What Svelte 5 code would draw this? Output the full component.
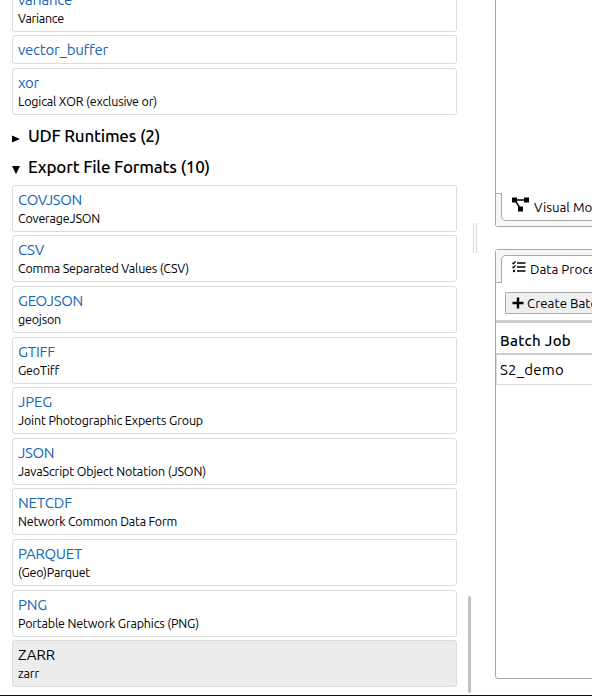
<script>
  const processes = [
    { name: 'variance', w: 54, text: 'Variance', tw: 46 },
    { name: 'vector_buffer', w: 90 },
    { name: 'xor', w: 21, text: 'Logical XOR (exclusive or)', tw: 139 }
  ];
  const formats = [
    { name: 'COVJSON', w: 64, text: 'CoverageJSON', tw: 82 },
    { name: 'CSV', w: 26, text: 'Comma Separated Values (CSV)', tw: 171 },
    { name: 'GEOJSON', w: 65, text: 'geojson', tw: 43 },
    { name: 'GTIFF', w: 37, text: 'GeoTiff', tw: 41 },
    { name: 'JPEG', w: 34, text: 'Joint Photographic Experts Group', tw: 185 },
    { name: 'JSON', w: 36, text: 'JavaScript Object Notation (JSON)', tw: 188 },
    { name: 'NETCDF', w: 54, text: 'Network Common Data Form', tw: 159 },
    { name: 'PARQUET', w: 64, text: '(Geo)Parquet', tw: 72 },
    { name: 'PNG', w: 29, text: 'Portable Network Graphics (PNG)', tw: 181 },
    { name: 'ZARR', w: 37, text: 'zarr', tw: 21, active: true }
  ];

  // Tracks a label so that it fills the given width
  function fit(node, width) {
    const natural = node.getBoundingClientRect().width;
    node.style.letterSpacing = `${(width - natural) / node.textContent.length}px`;
  }
</script>

{#snippet card(item)}
  <li class="card" class:active={item.active} class:single={!item.text}>
    <div class="name"><span use:fit={item.w}>{item.name}</span></div>
    {#if item.text}<div class="summary"><span use:fit={item.tw}>{item.text}</span></div>{/if}
  </li>
{/snippet}

<div class="app">
  <aside>
    <ul class="processes">
      {#each processes as item}{@render card(item)}{/each}
    </ul>
    <h3>
      <svg width="8" height="8" viewBox="0 0 8 8"><path d="M0 0.5 8 4 0 7.5Z" /></svg>
      <span use:fit={132}>UDF Runtimes (2)</span>
    </h3>
    <h3>
      <svg width="8" height="8" viewBox="0 0 8 8"><path d="M0 0H8L4 8Z" /></svg>
      <span use:fit={182}>Export File Formats (10)</span>
    </h3>
    <ul class="formats">
      {#each formats as item}{@render card(item)}{/each}
    </ul>
  </aside>
  <div class="gutter">
    <div class="thumb"></div>
    <div class="grip"></div>
  </div>
  <main>
    <section class="editor">
      <div class="tabs bottom">
        <div class="edge"></div>
        <div class="tab">
          <svg class="diagram" width="17" height="15" viewBox="0 0 17 15">
            <path d="M0 .5h5v5H0zM12 .5h5v5h-5zM6 9.5h5v5H6z" />
            <path d="M4 3H13M3.5 4 8 11" fill="none" stroke="#000" stroke-width="1.4" />
          </svg>
          <span>Visual Model</span>
        </div>
      </div>
    </section>
    <section class="jobs">
      <div class="tabs top">
        <div class="edge"></div>
        <div class="tab">
          <svg class="tasks" width="14" height="12" viewBox="0 0 14 12">
            <path d="M5 2H13.5M5 6H13.5M5 10H13.5" fill="none" stroke="#000" stroke-width="1.6" />
            <path d="M.4 1.8 1.4 2.8 3.6.4M.4 5.8 1.4 6.8 3.6 4.4" fill="none" stroke="#000" stroke-width="1.3" />
            <circle cx="2" cy="10" r="1.2" />
          </svg>
          <span>Data Processing</span>
        </div>
      </div>
      <div class="toolbar">
        <button>
          <svg width="12" height="12" viewBox="0 0 12 12"><path d="M4.8.5h2.4v4.3h4.3v2.4H7.2v4.3H4.8V7.2H.5V4.8h4.3z" /></svg>
          <span>Create Batch Job</span>
        </button>
      </div>
      <div class="head"><span use:fit={71}>Batch Job</span></div>
      <div class="row"><span use:fit={64}>S2_demo</span></div>
    </section>
  </main>
</div>

<style>
  :global(body) { overflow: hidden; background: #fff; }
  .app {
    box-sizing: border-box;
    display: flex;
    width: 592px;
    height: 696px;
    overflow: hidden;
    border-bottom: 1px solid #111;
    font-family: Ubuntu, "Noto Sans", sans-serif;
    color: #000;
  }
  span { white-space: nowrap; }
  svg { flex: none; }
  aside { width: 445px; padding-left: 12px; flex: none; }
  ul { list-style: none; margin: 0; padding: 0; display: flex; flex-direction: column; gap: 3.6px; }
  .processes { margin-top: -15.4px; margin-bottom: 5.7px; }
  .formats { margin-top: 2.3px; }
  .card {
    box-sizing: border-box;
    height: 47px;
    flex: none;
    border: 1px solid #ddd;
    border-radius: 3px;
    padding: 4px 5px;
  }
  .card.single { height: 29px; }
  .card.active { background: #ededed; }
  .name { height: 20px; line-height: 20px; font-size: 15px; color: #1665b6; }
  .active .name { color: #000; }
  .summary { height: 17px; line-height: 16px; font-size: 12.5px; }
  h3 {
    display: flex;
    align-items: center;
    gap: 8px;
    height: 31px;
    margin: 0;
    font-size: 17px;
    font-weight: 500;
  }
  h3 svg { margin-top: 6px; }

  .gutter { width: 38px; flex: none; display: flex; align-items: flex-start; }
  .thumb { width: 3px; height: 97px; margin: 596px 0 0 11px; border-radius: 2px; background: #c1c1c1; }
  .grip {
    box-sizing: border-box;
    width: 4px;
    height: 30px;
    margin: 223px 0 0 2px;
    border: solid #d8d8d8;
    border-width: 0 1px;
  }

  main { width: 160px; flex: none; display: flex; flex-direction: column; gap: 22px; }
  section { box-sizing: border-box; border: 1px solid #a6a6a6; }
  .editor { height: 227px; border-top: 0; border-radius: 0 0 0 3px; padding-top: 193px; }
  .jobs { height: 430px; border-radius: 3px 0 0 3px; }
  .tabs { box-sizing: border-box; height: 33px; display: flex; background: #f7f7f7; }
  .edge { box-sizing: border-box; width: 5px; flex: none; }
  .bottom .edge { border-top: 1px solid #aaa; }
  .top .edge { border-bottom: 1px solid #aaa; }
  .tab {
    box-sizing: border-box;
    width: 155px;
    flex: none;
    display: flex;
    align-items: center;
    background: #fff;
    border: 1px solid #aaa;
    font-size: 13.33px;
  }
  .bottom .tab { height: 28px; border-top: 0; border-radius: 0 0 0 5px; padding-left: 10px; gap: 5px; }
  .top .tab { height: 28px; margin-top: 5px; border-bottom: 0; border-radius: 5px 0 0; padding-left: 10px; gap: 4px; }
  .diagram { margin-top: -4px; }
  .tasks { margin-top: -5px; }
  .bottom span { margin-top: 1px; }
  .top .tab span { margin-top: -1px; }

  .toolbar { height: 37px; box-sizing: border-box; padding: 9px 0 0 9px; }
  button {
    box-sizing: border-box;
    display: flex;
    align-items: center;
    gap: 3px;
    width: 135px;
    height: 22px;
    margin: 0;
    padding: 0 6px;
    border: 1px solid #aaa;
    border-radius: 1px;
    background: #efefef;
    color: #000;
    font-family: inherit;
    font-size: 13.33px;
  }
  .head {
    box-sizing: border-box;
    height: 35px;
    border-top: 3px solid #ccc;
    border-bottom: 2px solid #ccc;
    padding: 2px 0 0 4px;
    font-size: 15px;
    line-height: 31px;
    font-weight: 500;
  }
  .row {
    box-sizing: border-box;
    height: 30px;
    border: 1px solid #ddd;
    border-top: 0;
    padding-left: 3px;
    font-size: 15px;
    line-height: 30px;
  }
</style>
